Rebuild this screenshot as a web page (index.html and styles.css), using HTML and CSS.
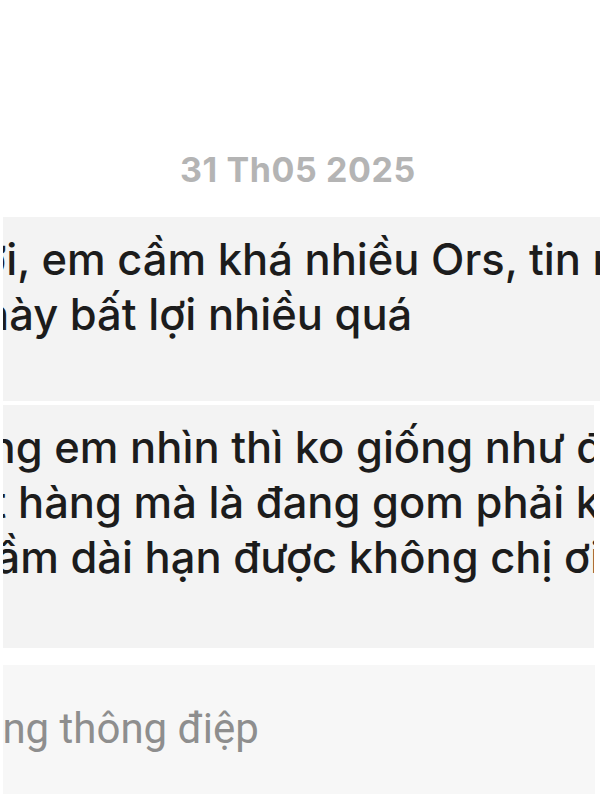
FILE: index.html
```html
<!DOCTYPE html>
<html lang="vi">
<head>
<meta charset="utf-8">
<link rel="stylesheet" href="styles.css">
</head>
<body>
<div class="screen">
  <div class="date-row"><span class="date">31 Th05 2025</span></div>
  <div class="bubble b1">
    <div class="line l11">ơi, em cầm khá nhiều Ors, tin nhắn</div>
    <div class="line l12">này bất lợi nhiều quá</div>
  </div>
  <div class="bubble b2">
    <div class="line l21">Nhưng em nhìn thì ko giống như đang</div>
    <div class="line l22">đặt hàng mà là đang gom phải không</div>
    <div class="line l23">cầm dài hạn được không chị ơi</div>
  </div>
  <div class="composer">
    <div class="placeholder">Nội dung thông điệp</div>
  </div>
</div>
</body>
</html>
```
FILE: styles.css
```css
html, body {
  margin: 0;
  padding: 0;
  background: #ffffff;
}
.screen {
  width: 600px;
  height: 800px;
  overflow: hidden;
  font-family: Inter, "Noto Sans", sans-serif;
  display: flex;
  flex-direction: column;
}
.date-row {
  height: 217px;
  display: flex;
  justify-content: center;
  align-items: flex-start;
  box-sizing: border-box;
  padding-top: 150px;
  padding-right: 4px;
}
.date {
  font-size: 34px;
  font-weight: 700;
  letter-spacing: 0.6px;
  color: #b4b4b4;
  line-height: 40px;
}
.bubble {
  background: #f3f3f3;
  margin-left: 3px;
  overflow: hidden;
  white-space: nowrap;
  color: #1c1c1c;
  font-size: 43.5px;
  font-weight: 500;
  line-height: 55px;
}
.b1 {
  height: 184px;
  box-sizing: border-box;
  padding-top: 15px;
}
.b2 {
  margin-top: 4px;
  height: 243px;
  box-sizing: border-box;
  padding-top: 15px;
  margin-right: 6px;
}
.line { white-space: nowrap; }
.l11 { margin-left: -23px; }
.l12 { margin-left: -20px; }
.l21 { margin-left: -100px; }
.l22 { margin-left: -63px; }
.l23 { margin-left: -33px; }
.composer {
  margin-top: 17px;
  margin-left: 3px;
  margin-right: 5px;
  height: 129px;
  background: #f7f7f7;
  overflow: hidden;
  white-space: nowrap;
  box-sizing: border-box;
  padding-top: 36px;
  font-family: Roboto, "Noto Sans", sans-serif;
}
.placeholder {
  font-size: 42px;
  line-height: 56px;
  color: #8e8e8e;
  margin-left: -122px;
}
```
